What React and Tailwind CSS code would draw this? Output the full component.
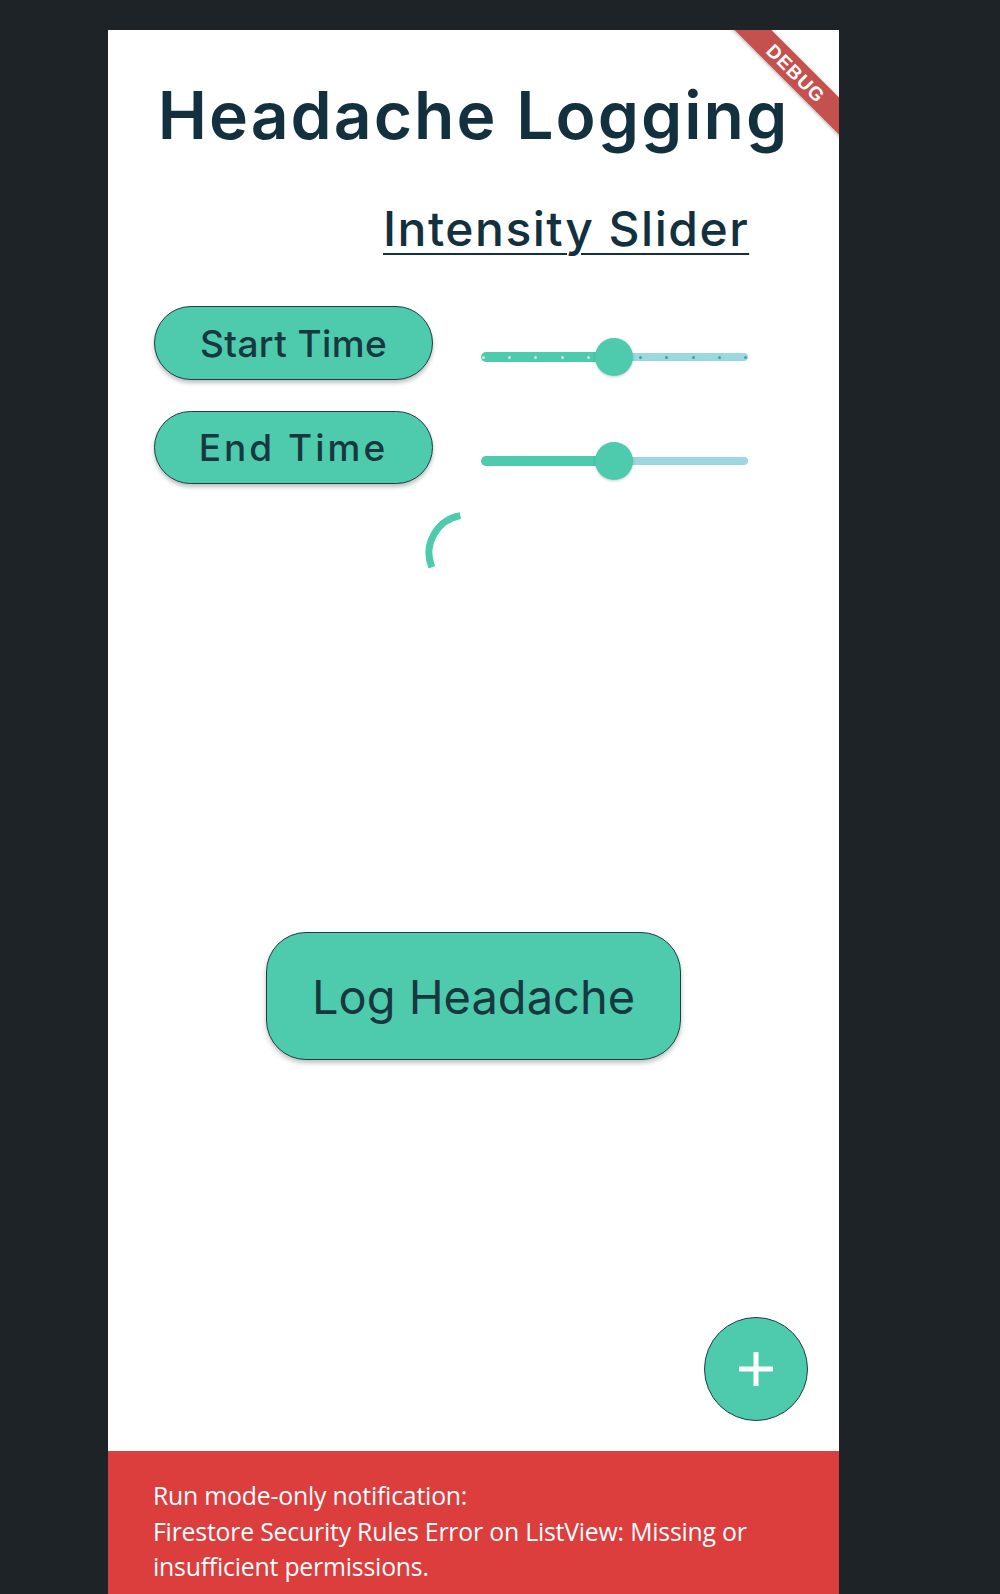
import React from 'react';

const Slider = ({ ticks }) => (
  <div className="relative w-[267px] h-[40px] flex items-center">
    <div className="h-[10px] w-[133px] rounded-l-full bg-[#4ecbad]" />
    <div className="h-[8px] flex-1 rounded-r-full bg-[#9cd8e1]" />
    {ticks && (
      <div className="absolute inset-x-0 flex items-center justify-between px-[1px]">
        {Array.from({ length: 11 }).map((_, i) => (
          <span
            key={i}
            className={i < 5 ? 'w-[3px] h-[3px] rounded-full bg-[#c9efe5]' : 'w-[3px] h-[3px] rounded-full bg-[#3aa5a6]'}
          />
        ))}
      </div>
    )}
    <div className="absolute left-[114px] top-[1px] w-[38px] h-[38px] rounded-full bg-[#4ecbad] shadow-[0_1px_3px_rgba(0,0,0,0.2)]" />
  </div>
);

const PillButton = ({ children, spaced }) => (
  <button
    className={
      spaced
        ? 'w-[279px] h-[73px] rounded-full bg-[#4ecbad] border border-[#1d3f42] shadow-[0_3px_4px_rgba(0,0,0,0.25)] text-[37px] font-medium tracking-[3px] text-[#17383f] leading-none'
        : 'w-[279px] h-[74px] rounded-full bg-[#4ecbad] border border-[#1d3f42] shadow-[0_3px_4px_rgba(0,0,0,0.25)] text-[37px] font-medium tracking-[0.4px] text-[#17383f] leading-none'
    }
  >
    {children}
  </button>
);

export default function App() {
  return (
    <div className="w-full min-h-[1594px] bg-[#1e2327] pt-[30px] font-['Inter',sans-serif]">
      <div className="relative ml-[108px] w-[731px] h-[1564px] bg-white overflow-hidden flex flex-col">
        {/* debug banner */}
        <div className="absolute right-[-40px] top-[30px] w-[166px] h-[26px] rotate-45 bg-[#c5514f] shadow-[0_1px_4px_rgba(0,0,0,0.3)] flex items-center justify-center">
          <span className="text-white text-[19px] font-black tracking-[1px] leading-none font-['Liberation_Sans',sans-serif]">DEBUG</span>
        </div>

        <h1 className="mt-[52px] text-center text-[66px] font-semibold leading-none text-[#12303e] tracking-[2px]">
          Headache Logging
        </h1>

        <div className="mt-[57px] pl-[275px]">
          <span className="text-[48px] font-medium leading-none tracking-[1.5px] text-[#12303e] underline decoration-2 underline-offset-[7px]">
            Intensity Slider
          </span>
        </div>

        <div className="mt-[53px] pl-[46px] flex items-center gap-[48px]">
          <PillButton>Start Time</PillButton>
          <div className="mt-[28px]">
            <Slider ticks />
          </div>
        </div>

        <div className="mt-[31px] pl-[46px] flex items-center gap-[48px]">
          <PillButton spaced>End Time</PillButton>
          <div className="mt-[26px]">
            <Slider />
          </div>
        </div>

        <div className="mt-[27px] pl-[317px]">
          <svg width="84" height="84" viewBox="0 0 84 84" fill="none">
            <path d="M6.8 56.2 A38 38 0 0 1 35.4 4.6" stroke="#4ecbad" strokeWidth="7" />
          </svg>
        </div>

        <div className="mt-[337px] flex justify-center">
          <button className="w-[415px] h-[128px] rounded-[40px] bg-[#4ecbad] border border-[#1d3f42] shadow-[0_3px_5px_rgba(0,0,0,0.25)] text-[47px] leading-none text-[#17383f]">
            Log Headache
          </button>
        </div>

        <div className="mt-[257px] flex justify-end pr-[31px]">
          <button className="w-[104px] h-[104px] rounded-full bg-[#4ecbad] border border-[#1d3f42] flex items-center justify-center">
            <svg width="36" height="36" viewBox="0 0 36 36">
              <path d="M18 1v34M1 18h34" stroke="white" strokeWidth="5" />
            </svg>
          </button>
        </div>

        <div className="mt-auto h-[143px] bg-[#dc3d3d] pt-[27px] pl-[45px] text-white text-[24.8px] leading-[35.5px] tracking-[-0.2px] font-['Open_Sans',sans-serif]">
          <div>Run mode-only notification:</div>
          <div>Firestore Security Rules Error on ListView: Missing or</div>
          <div>insufficient permissions.</div>
        </div>
      </div>
    </div>
  );
}
